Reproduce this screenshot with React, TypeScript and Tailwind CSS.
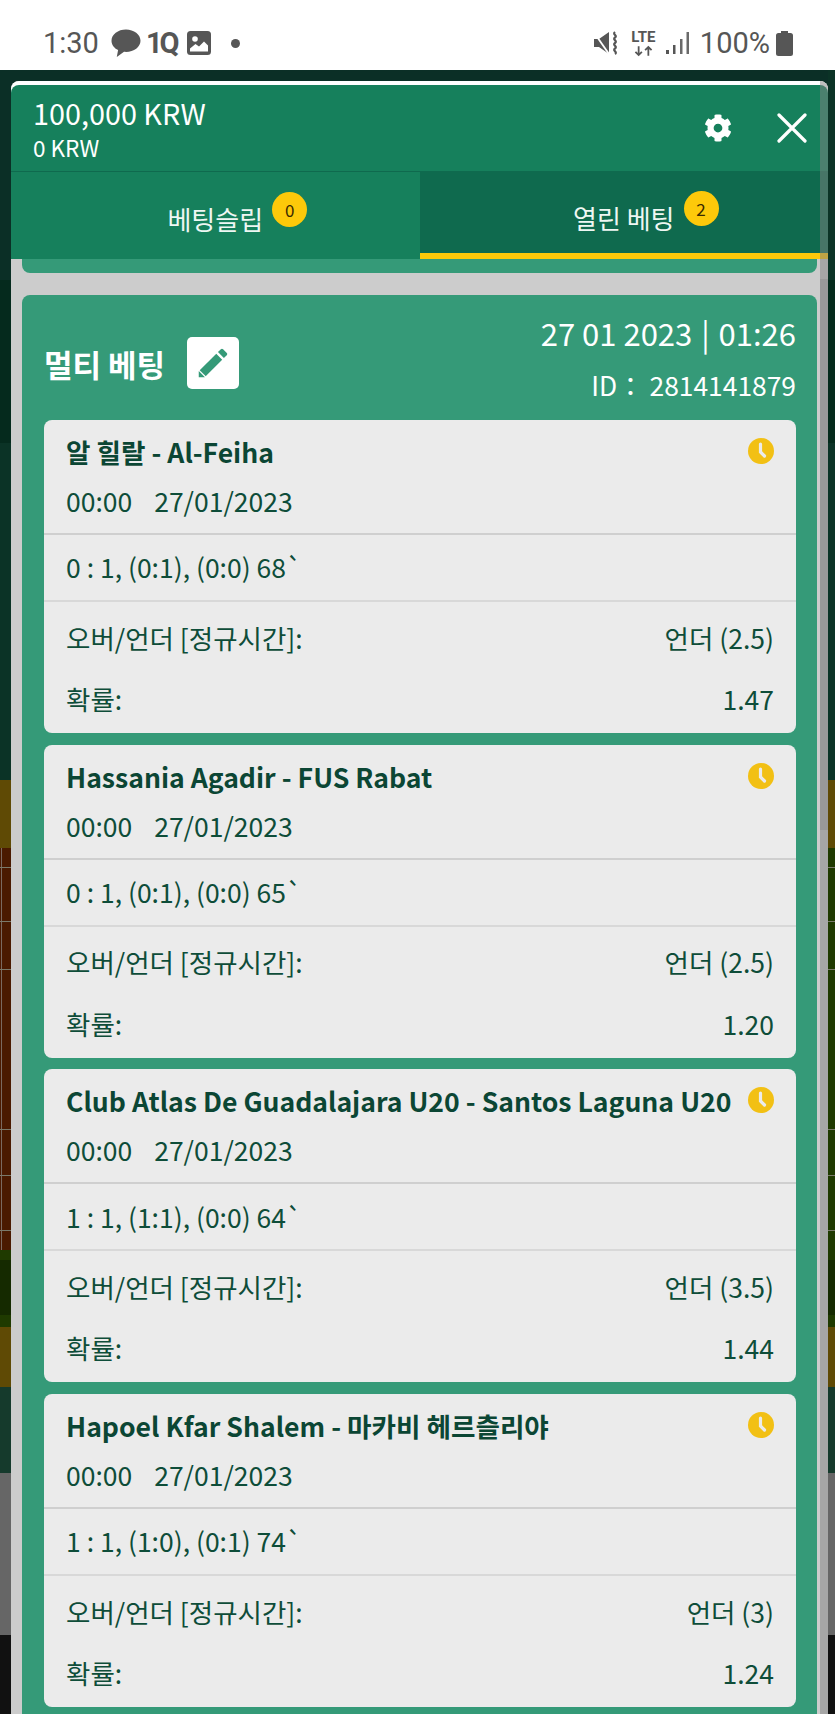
import { FaCog } from "react-icons/fa";

const KR = { fontFamily: '"Noto Sans CJK KR", "Noto Sans", sans-serif' };

type Band = { h: number; c: string; lines?: number[]; edge?: boolean };

const fieldLines = [19, 73, 121, 281, 327, 382];

const leftBands: Band[] = [
  { h: 210, c: "bg-[#0b2f26]" },
  { h: 163, c: "bg-[#052a1d]" },
  { h: 337, c: "bg-[#0b3326]" },
  { h: 68, c: "bg-[#5f4a05]" },
  { h: 402, c: "bg-[#4a1a00]", lines: fieldLines, edge: true },
  { h: 10, c: "bg-[#1f3a00]" },
  { h: 55, c: "bg-[#152a00]" },
  { h: 12, c: "bg-[#1f3a00]" },
  { h: 60, c: "bg-[#5f4a05]" },
  { h: 86, c: "bg-[#153a2c]" },
  { h: 162, c: "bg-[#666666]" },
  { h: 79, c: "bg-[#111111]" },
];

const rightBands: Band[] = [
  { h: 210, c: "bg-[#0b3326]" },
  { h: 163, c: "bg-[#042a1b]" },
  { h: 337, c: "bg-[#0b3326]" },
  { h: 68, c: "bg-[#5f4a05]" },
  { h: 402, c: "bg-[#1f3a00]", lines: fieldLines },
  { h: 10, c: "bg-[#1f3a00]" },
  { h: 55, c: "bg-[#152a00]" },
  { h: 12, c: "bg-[#1f3a00]" },
  { h: 60, c: "bg-[#5f4a05]" },
  { h: 86, c: "bg-[#153a2c]" },
  { h: 162, c: "bg-[#666666]" },
  { h: 79, c: "bg-[#111111]" },
];

function Strip({ bands, width }: { bands: Band[]; width: string }) {
  return (
    <div className={`flex flex-col ${width}`}>
      {bands.map((b, i) => (
        <div key={i} className={`relative ${b.c}`} style={{ height: b.h }}>
          {b.edge && <div className="absolute bottom-0 left-[1px] top-0 w-px bg-[#7a6a60]" />}
          {b.lines?.map((t) => (
            <div key={t} className="absolute left-0 right-0 h-px bg-[#7a7a6a]" style={{ top: t }} />
          ))}
        </div>
      ))}
    </div>
  );
}

function StatusBar() {
  return (
    <div
      className="flex h-[70px] items-center bg-white pl-[43px] pr-[42px] pt-[16px] text-[#565656]"
      style={{ fontFamily: "Roboto, sans-serif" }}
    >
      <span className="text-[29px] leading-none">1:30</span>
      <svg viewBox="0 0 30 28" className="ml-[12px] h-[29px] w-[30px]">
        <path
          d="M15 0C7 0 0.5 4.900 0.5 11.200c0 4 2.600 7.400 6.600 9.400L5.800 27.600l7.200-5.300c.7.1 1.300.1 2 .1 8 0 14.500-5 14.500-11.200S23 0 15 0z"
          fill="#565656"
        />
      </svg>
      <span className="ml-[5px] text-[29px] font-bold leading-none tracking-[-3px]">1Q</span>
      <svg viewBox="0 0 24 24" className="ml-[10px] h-[24px] w-[24px]">
        <rect x="0" y="0" width="24" height="24" rx="3.500" fill="#565656" />
        <circle cx="8" cy="8" r="2.800" fill="#fff" />
        <path d="M3 20.500v-3l5.500-4.500 3.500 2.500 5-5 4 4v6z" fill="#fff" />
      </svg>
      <span className="ml-[20px] h-[9px] w-[9px] rounded-full bg-[#565656]" />

      <div className="ml-auto flex items-center">
        <svg viewBox="0 0 25 24" className="h-[24px] w-[25px]">
          <path d="M0 8h5l10-7v22L5 16H0z" fill="#565656" />
          <path d="M1 3l14 20" stroke="#fff" strokeWidth="1.800" />
          <path
            d="M21 1c-3 2.500 3 3.500 0 5.500s3 3.500 0 5.500 3 3.500 0 5.500 3 3.500 0 5.500"
            fill="none"
            stroke="#565656"
            strokeWidth="2.200"
          />
        </svg>
        <div className="ml-[11px] flex w-[27px] flex-col items-center">
          <span className="text-[15px] font-bold leading-[15px]">LTE</span>
          <svg viewBox="0 0 26 12" className="h-[12px] w-[21px]">
            <path d="M7 0v10M3 7l4 4 4-4M19 12V2M15 5l4-4 4 4" fill="none" stroke="#565656" strokeWidth="2.200" />
          </svg>
        </div>
        <svg viewBox="0 0 23 22" className="ml-[9px] h-[22px] w-[23px]">
          <rect x="0" y="18" width="3" height="4" fill="#565656" />
          <rect x="7" y="13" width="2.500" height="9" fill="#565656" />
          <rect x="14" y="7" width="2.500" height="15" fill="#6a6a6a" />
          <rect x="20.500" y="0" width="2.500" height="22" fill="#6a6a6a" />
        </svg>
        <span className="ml-[11px] text-[29px] leading-none">100%</span>
        <svg viewBox="0 0 17 25" className="ml-[6px] h-[25px] w-[17px]">
          <path
            d="M5 0h7v2h2.500A2.500 2.500 0 0 1 17 4.500V22.500A2.500 2.500 0 0 1 14.500 25h-12A2.500 2.500 0 0 1 0 22.500V4.500A2.500 2.500 0 0 1 2.500 2H5z"
            fill="#565656"
          />
        </svg>
      </div>
    </div>
  );
}

function Tab({ label, count, active }: { label: string; count: number; active?: boolean }) {
  return (
    <div
      className={`flex h-[88px] flex-1 items-center justify-center ${
        active ? "border-b-[6px] border-[#fdc90a] bg-[#0f6a4e] pt-[12px]" : "border-t border-[#0f6a4e] bg-[#16805c] pt-[6px]"
      }`}
    >
      <span className="relative text-[26px] leading-none text-[#eef7f3]">
        {label}
        <span className="absolute left-[calc(100%+9px)] top-[-14px] flex h-[35px] w-[35px] items-center justify-center rounded-full bg-[#fdc90a] text-[17px] text-[#3a2a00]">
          {count}
        </span>
      </span>
    </div>
  );
}

function ClockBadge() {
  return (
    <svg viewBox="0 0 26 26" className="mt-[4px] h-[26px] w-[26px] shrink-0">
      <circle cx="13" cy="13" r="13" fill="#f2c014" />
      <path d="M12.500 6v8l4 4" fill="none" stroke="#ebebeb" strokeWidth="3.200" strokeLinecap="round" />
    </svg>
  );
}

type Bet = { title: string; score: string; pick: string; odds: string };

const bets: Bet[] = [
  { title: "알 힐랄 - Al-Feiha", score: "0 : 1, (0:1), (0:0) 68`", pick: "언더 (2.5)", odds: "1.47" },
  { title: "Hassania Agadir - FUS Rabat", score: "0 : 1, (0:1), (0:0) 65`", pick: "언더 (2.5)", odds: "1.20" },
  {
    title: "Club Atlas De Guadalajara U20 - Santos Laguna U20",
    score: "1 : 1, (1:1), (0:0) 64`",
    pick: "언더 (3.5)",
    odds: "1.44",
  },
  { title: "Hapoel Kfar Shalem - 마카비 헤르츨리야", score: "1 : 1, (1:0), (0:1) 74`", pick: "언더 (3)", odds: "1.24" },
];

function BetCard({ bet }: { bet: Bet }) {
  return (
    <div className="rounded-[8px] bg-[#ebebeb] text-[26.5px] text-[#0e4d39]">
      <div className="h-[115px] border-b-2 border-[#cfcfcf] px-[22px] pt-[14px]">
        <div className="flex items-start justify-between">
          <span className="whitespace-nowrap text-[26.6px] font-bold leading-[36px] text-[#0b4634]">{bet.title}</span>
          <ClockBadge />
        </div>
        <div className="mt-[13px] leading-[36px]">
          <span>00:00</span>
          <span className="ml-[22px]">27/01/2023</span>
        </div>
      </div>
      <div className="flex h-[67px] items-center border-b-2 border-[#d8d8d8] px-[22px] leading-none">{bet.score}</div>
      <div className="flex h-[71px] items-center justify-between px-[22px]">
        <span>오버/언더 [정규시간]:</span>
        <span>{bet.pick}</span>
      </div>
      <div className="flex h-[60px] items-start justify-between px-[22px] pt-[6px]">
        <span>확률:</span>
        <span>{bet.odds}</span>
      </div>
    </div>
  );
}

function BetSlipPanel() {
  return (
    <div
      className="absolute bottom-0 left-[11px] right-[7px] top-[81px] overflow-hidden rounded-t-[8px] bg-[#cccccc] text-white"
      style={KR}
    >
      <div className="bg-white pt-[4px]">
        <div className="flex h-[86px] items-center justify-between rounded-t-[8px] bg-[#16805c] pl-[22px] pr-[21px]">
          <div className="flex flex-col">
            <span className="text-[28.8px] leading-[34px]">100,000 KRW</span>
            <span className="mt-[3px] text-[22.500px] leading-[28px]">0 KRW</span>
          </div>
          <div className="flex items-center">
            <FaCog className="h-[28px] w-[28px]" />
            <svg viewBox="0 0 30 30" className="ml-[45px] h-[30px] w-[30px]">
              <path d="M2 2l26 26M28 2L2 28" stroke="#fff" strokeWidth="3.200" strokeLinecap="round" />
            </svg>
          </div>
        </div>
      </div>
      <div className="flex">
        <Tab label="베팅슬립" count={0} />
        <Tab label="열린 베팅" count={2} active />
      </div>

      <div className="px-[11px]">
        <div className="h-[14px] rounded-b-[8px] bg-[#359a78]" />
        <div className="mt-[22px] rounded-[8px] bg-[#359a78] pb-[24px] pl-[22px] pr-[21px]">
          <div className="flex h-[125px] items-start justify-between">
            <div className="flex items-center pt-[42px]">
              <span className="text-[31px] font-bold leading-none">멀티 베팅</span>
              <span className="ml-[22px] flex h-[52px] w-[52px] items-center justify-center rounded-[5px] bg-white">
                <svg viewBox="0 0 24 24" className="h-[38px] w-[38px]">
                  <path
                    d="M3 17.250V21h3.750L17.810 9.940l-3.750-3.750L3 17.250zM20.710 7.040a1 1 0 0 0 0-1.410l-2.340-2.340a1 1 0 0 0-1.410 0l-1.830 1.830 3.750 3.750 1.830-1.830z"
                    fill="#359a78"
                  />
                  <path d="M3 16.500l4.500 4.500" stroke="#fff" strokeWidth="0.800" />
                </svg>
              </span>
            </div>
            <div className="flex flex-col items-end pt-[16px]">
              <span className="text-[31px] leading-[44px]">
                27 01 2023 <span className="mx-[2px]">|</span> 01:26
              </span>
              <span className="mt-[12px] text-[26.400px] leading-[36px]">ID： 2814141879</span>
            </div>
          </div>
          <div className="flex flex-col gap-[11.700px]">
            {bets.map((b) => (
              <BetCard key={b.title} bet={b} />
            ))}
          </div>
        </div>
      </div>

      {/* Overlay scrollbar along the panel's right edge */}
      <div className="absolute bottom-0 right-0 top-0 w-[8px] bg-[#808080]/50">
        <div className="mt-[198px] h-[551px] bg-[#808080]/35" />
      </div>
    </div>
  );
}

export default function App() {
  return (
    <div className="relative h-[1714px] w-[835px] overflow-hidden bg-[#0b2f26]">
      <StatusBar />
      <div className="flex justify-between">
        <Strip bands={leftBands} width="w-[11px]" />
        <Strip bands={rightBands} width="w-[7px]" />
      </div>
      <BetSlipPanel />
    </div>
  );
}
